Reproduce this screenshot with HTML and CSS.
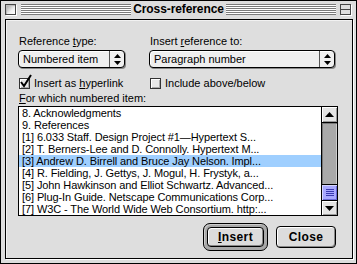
FILE: index.html
```html
<!DOCTYPE html>
<html>
<head>
<meta charset="utf-8">
<link rel="stylesheet" href="styles.css">
</head>
<body>
<div class="window">
  <div class="titlebar">
    <span class="closebox"></span>
    <span class="stripes"></span>
    <span class="title">Cross-reference</span>
    <span class="stripes"></span>
    <span class="zoombox"></span>
  </div>
  <div class="content">
    <div class="grid">
      <div class="label">Reference <u>t</u>ype:</div>
      <div class="label">Insert <u>r</u>eference to:</div>
      <div class="popup">
        <span class="val">Numbered item</span>
        <span class="arrows"><svg width="7" height="11" viewBox="0 0 7 11"><path d="M3.5 0 L7 4 L0 4 Z M0 7 L7 7 L3.5 11 Z" fill="#000"/></svg></span>
      </div>
      <div class="popup">
        <span class="val">Paragraph number</span>
        <span class="arrows"><svg width="7" height="11" viewBox="0 0 7 11"><path d="M3.5 0 L7 4 L0 4 Z M0 7 L7 7 L3.5 11 Z" fill="#000"/></svg></span>
      </div>
    </div>
    <div class="grid checks">
      <div class="check">
        <span class="box"><svg class="mark" width="14" height="15" viewBox="0 0 14 15"><path d="M2 8 L5 12 L12 1" stroke="#000" stroke-width="2" fill="none"/></svg></span>
        <span>Insert as <u>h</u>yperlink</span>
      </div>
      <div class="check">
        <span class="box"></span>
        <span>Include above/below</span>
      </div>
    </div>
    <div class="label which"><u>F</u>or which numbered item:</div>
    <div class="listbox">
      <ul class="items">
        <li>8. Acknowledgments</li>
        <li>9. References</li>
        <li>[1] 6.033 Staff. Design Project #1—Hypertext S...</li>
        <li>[2] T. Berners-Lee and D. Connolly. Hypertext M...</li>
        <li class="sel">[3] Andrew D. Birrell and Bruce Jay Nelson. Impl...</li>
        <li>[4] R. Fielding, J. Gettys, J. Mogul, H. Frystyk, a...</li>
        <li>[5] John Hawkinson and Elliot Schwartz. Advanced...</li>
        <li>[6] Plug-In Guide. Netscape Communications Corp...</li>
        <li>[7] W3C - The World Wide Web Consortium. http:...</li>
      </ul>
      <div class="scrollbar">
        <div class="sb-btn up"><svg width="9" height="5" viewBox="0 0 9 5"><path d="M4.5 0 L9 5 L0 5 Z" fill="#000"/></svg></div>
        <div class="track"></div>
        <div class="thumb"></div>
        <div class="sb-btn down"><svg width="9" height="5" viewBox="0 0 9 5"><path d="M0 0 L9 0 L4.5 5 Z" fill="#000"/></svg></div>
      </div>
    </div>
    <div class="buttons">
      <div class="ring"><button class="btn insert"><u>I</u>nsert</button></div>
      <button class="btn close">Close</button>
    </div>
  </div>
</div>
</body>
</html>
```
FILE: styles.css
```css
html, body { margin: 0; padding: 0; background: #ddd; }
.window {
  width: 357px; height: 264px; box-sizing: border-box;
  border: 1px solid #000; background: #dddddd;
  padding: 0 3px 4px 4px;
  display: flex; flex-direction: column;
  font-family: "Liberation Sans", Arial, sans-serif;
  font-size: 11px; color: #000;
}
.titlebar {
  height: 18px; flex: none;
  margin: 0 -3px 0 -4px;
  padding: 3px 5px 0 4px; box-sizing: border-box;
  display: flex; align-items: flex-start;
}
.closebox, .zoombox {
  width: 11px; height: 11px; box-sizing: border-box; flex: none;
  border: 1px solid #444;
  background: linear-gradient(135deg, #999 0%, #eee 60%, #fff 100%);
  box-shadow: inset 1px 1px 0 #bbb, 1px 1px 0 #fff;
}
.closebox { margin-right: 5px; }
.zoombox {
  margin-left: 4px;
  background: #ddd;
  box-shadow: 1px 1px 0 #fff;
  position: relative;
}
.zoombox::after {
  content: ""; position: absolute; left: 0; right: 0; top: 4px; height: 1px; background: #444;
}
.stripes {
  flex: 1; height: 11px;
  background: repeating-linear-gradient(to bottom, #7a7a7a 0 1px, #fff 1px 2px);
}
.title {
  font-weight: bold; font-size: 12px; line-height: 12px; letter-spacing: -0.1px;
  padding: 0 2px; margin-top: -1px;
  white-space: nowrap;
}
.content {
  flex: 1; box-sizing: border-box;
  border: 1px solid #000;
  box-shadow: 1px 1px 0 #fff, inset 1px 1px 0 #f2f2f2;
  background: #dedede;
  padding: 15px 14px 0 12px;
  display: flex; flex-direction: column;
}
.grid {
  display: grid; grid-template-columns: 107px 186px; column-gap: 24px;
}
.label { line-height: 13px; height: 13px; padding-left: 1px; white-space: nowrap; }
u { text-decoration: underline; text-underline-offset: 1px; }
.popup {
  margin-top: 2px; height: 18px; box-sizing: border-box;
  border: 1px solid #000; border-radius: 4px;
  background: #efefef;
  box-shadow: 1px 1px 0 #888, inset 1px 1px 0 #fff;
  display: flex; align-items: stretch;
}
.popup .val { flex: 1; padding-left: 4px; line-height: 16px; white-space: nowrap; }
.popup .arrows {
  width: 14px; border-left: 1px solid #555;
  display: flex; align-items: center; justify-content: center;
}
.checks { margin-top: 9px; }
.check { display: flex; align-items: center; gap: 4px; height: 13px; line-height: 13px; padding-left: 1px; white-space: nowrap; }
.box {
  width: 11px; height: 11px; box-sizing: border-box; flex: none;
  border: 1px solid #333; background: #e8e8e8;
  box-shadow: inset 1px 1px 0 #fff, inset -1px -1px 0 #aaa;
  position: relative;
}
.mark { position: absolute; left: -1px; top: -5px; }
.which { margin-top: 2px; }
.listbox {
  margin-top: 1px; height: 110px; box-sizing: border-box;
  border: 1px solid #000; background: #fff;
  display: flex;
}
.items {
  flex: 1; margin: 0; padding: 0; list-style: none; overflow: hidden;
  letter-spacing: -0.1px;
}
.items li {
  height: 12px; line-height: 12px; padding-left: 3px; white-space: nowrap; overflow: hidden;
}
.items li.sel { background: #9fcfff; }
.scrollbar {
  width: 16px; box-sizing: border-box; border-left: 1px solid #000;
  display: flex; flex-direction: column;
}
.sb-btn {
  display: flex; align-items: center; justify-content: center;
  background: #e4e4e4; box-shadow: inset 1px 1px 0 #fff, inset -1px -1px 0 #999;
  box-sizing: border-box;
}
.sb-btn.up { height: 16px; border-bottom: 1px solid #000; }
.sb-btn.down { height: 15px; border-top: 1px solid #000; }
.track {
  flex: 1; background: #a9a9a9;
  box-shadow: inset 1px 1px 0 #777, inset -1px 0 0 #ccc;
}
.thumb {
  height: 16px; box-sizing: border-box; border-top: 1px solid #000;
  background:
    repeating-linear-gradient(to bottom, #3a3ab0 0 1px, transparent 1px 2px) center / 8px 7px no-repeat,
    #a8a8ff;
  box-shadow: inset 1px 1px 0 #d6d6ff, inset -1px -1px 0 #6a6ad8;
}
.buttons {
  margin-top: 7px; padding-right: 2px;
  display: flex; justify-content: flex-end; align-items: center; gap: 8px;
}
.ring {
  border: 1px solid #000; border-radius: 7px; padding: 3px;
  background: #a8a8a8; box-shadow: inset 1px 1px 0 #ccc;
  display: flex;
}
.btn {
  font-family: "Liberation Sans", Arial, sans-serif;
  font-weight: bold; font-size: 12px; letter-spacing: 0.4px;
  margin: 0; padding: 0; color: #000;
  border: 1px solid #000; border-radius: 4px;
  background: #dcdcdc;
  box-shadow: inset 1px 1px 0 #fff, inset -1px -1px 0 #888;
}
.btn.insert { width: 57px; height: 20px; }
.btn.close { width: 60px; height: 22px; }
```
